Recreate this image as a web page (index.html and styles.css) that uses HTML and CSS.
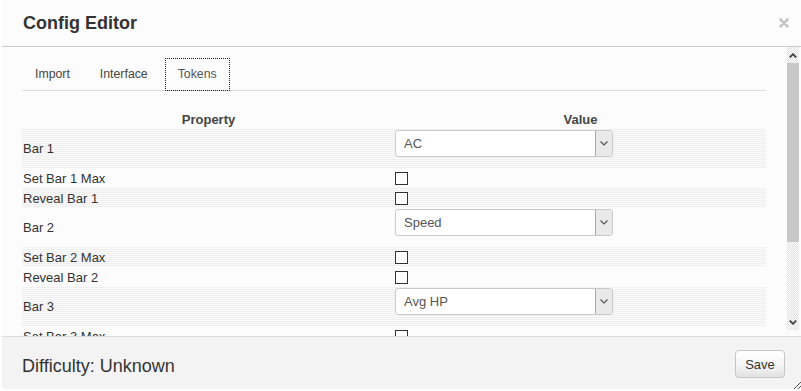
FILE: index.html
```html
<!DOCTYPE html>
<html>
<head>
    <title>Config Editor</title>
    <link rel="stylesheet" href="styles.css">
</head>
<body>
    <div class="dialog">
        <div class="dialog-header">
            <h1>Config Editor</h1>
            <span class="close" title="Close">
                <svg width="10" height="10" viewBox="0 0 10 10"><path d="M1.5 1.5 L8.5 8.5 M8.5 1.5 L1.5 8.5" stroke="#c4c4c4" stroke-width="2.6" stroke-linecap="round"/></svg>
            </span>
        </div>

        <div class="dialog-body">
            <div class="content">
                <ul class="tabs">
                    <li>Import</li>
                    <li>Interface</li>
                    <li class="active">Tokens</li>
                </ul>

                <table class="config">
                    <thead>
                        <tr>
                            <th class="prop">Property</th>
                            <th>Value</th>
                        </tr>
                    </thead>
                    <tbody>
                        <tr class="bar">
                            <td>Bar 1</td>
                            <td>
                                <div class="select">
                                    <select><option>AC</option></select>
                                    <span class="arrow"><svg width="8" height="5" viewBox="0 0 8 5"><path d="M0.5 0.5 L4 4 L7.5 0.5" fill="none" stroke="#555" stroke-width="1.2"/></svg></span>
                                </div>
                            </td>
                        </tr>
                        <tr class="check">
                            <td>Set Bar 1 Max</td>
                            <td><input type="checkbox"></td>
                        </tr>
                        <tr class="check">
                            <td>Reveal Bar 1</td>
                            <td><input type="checkbox"></td>
                        </tr>
                        <tr class="bar">
                            <td>Bar 2</td>
                            <td>
                                <div class="select">
                                    <select><option>Speed</option></select>
                                    <span class="arrow"><svg width="8" height="5" viewBox="0 0 8 5"><path d="M0.5 0.5 L4 4 L7.5 0.5" fill="none" stroke="#555" stroke-width="1.2"/></svg></span>
                                </div>
                            </td>
                        </tr>
                        <tr class="check">
                            <td>Set Bar 2 Max</td>
                            <td><input type="checkbox"></td>
                        </tr>
                        <tr class="check">
                            <td>Reveal Bar 2</td>
                            <td><input type="checkbox"></td>
                        </tr>
                        <tr class="bar">
                            <td>Bar 3</td>
                            <td>
                                <div class="select">
                                    <select><option>Avg HP</option></select>
                                    <span class="arrow"><svg width="8" height="5" viewBox="0 0 8 5"><path d="M0.5 0.5 L4 4 L7.5 0.5" fill="none" stroke="#555" stroke-width="1.2"/></svg></span>
                                </div>
                            </td>
                        </tr>
                        <tr class="check">
                            <td>Set Bar 3 Max</td>
                            <td><input type="checkbox"></td>
                        </tr>
                        <tr class="check">
                            <td>Reveal Bar 3</td>
                            <td><input type="checkbox"></td>
                        </tr>
                    </tbody>
                </table>
            </div>

            <div class="scrollbar">
                <div class="sb-btn">
                    <svg width="8" height="5" viewBox="0 0 8 5"><path d="M0.8 4.5 L4 1.2 L7.2 4.5" fill="none" stroke="#444" stroke-width="1.8"/></svg>
                </div>
                <div class="sb-track">
                    <div class="sb-thumb"></div>
                </div>
                <div class="sb-btn">
                    <svg width="8" height="5" viewBox="0 0 8 5"><path d="M0.8 0.5 L4 3.8 L7.2 0.5" fill="none" stroke="#444" stroke-width="1.8"/></svg>
                </div>
            </div>
        </div>

        <div class="dialog-footer">
            <span class="difficulty">Difficulty: Unknown</span>
            <button class="save">Save</button>
        </div>

        <svg class="resize" width="11" height="11" viewBox="0 0 11 11"><path d="M1 11 L11 1 M5 11 L11 5" stroke="#555" stroke-width="1"/></svg>
    </div>
</body>
</html>
```

FILE: styles.css
```css
body {
    margin: 0;
    background: #ffffff;
    font-family: "Liberation Sans", Arial, sans-serif;
    font-size: 13px;
    color: #333;
}

.dialog {
    position: relative;
    height: 389px;
    margin-left: 2px;
    display: flex;
    flex-direction: column;
    background: #fcfcfc;
    border-radius: 0 0 4px 4px;
}

.dialog-header {
    height: 46px;
    flex-shrink: 0;
    display: flex;
    align-items: center;
    justify-content: space-between;
    padding: 0 12px 0 21px;
    border-bottom: 1px solid #cbcbcb;
}

.dialog-header h1 {
    margin: 0;
    font-size: 18px;
    font-weight: bold;
    color: #333;
}

.close {
    display: flex;
    margin-top: -1px;
}

.dialog-body {
    flex: 1;
    min-height: 0;
    display: flex;
    overflow: hidden;
}

.content {
    flex: 1;
    min-width: 0;
    padding: 11px 21px 0 20px;
    overflow: hidden;
}

.tabs {
    list-style: none;
    margin: 0;
    padding: 0;
    display: flex;
    gap: 4px;
    border-bottom: 1px solid #dcdcdc;
}

.tabs li {
    padding: 0 12px;
    font-size: 12.3px;
    line-height: 31px;
    border: 1px solid transparent;
    margin-bottom: -1px;
    color: #444;
}

.tabs li.active {
    border: 1px dotted #222;
    color: #555;
}

.config {
    width: 100%;
    margin-top: 18px;
    border-collapse: collapse;
    table-layout: fixed;
}

.config th {
    height: 20px;
    padding: 0;
    font-weight: bold;
    text-align: center;
    color: #444;
}

.config th.prop {
    width: 373px;
}

.config td {
    padding: 0;
    vertical-align: middle;
}

.config td:first-child {
    padding-left: 1px;
}

.config tr.bar td {
    height: 39px;
}

.config tr.check td {
    height: 20px;
}

.config tbody tr:nth-child(odd) {
    background: repeating-linear-gradient(to bottom, #efefef 0, #efefef 1px, #fafafa 1px, #fafafa 2px);
}

.select {
    display: flex;
    width: 218px;
    height: 27px;
    box-sizing: border-box;
    margin-bottom: 10px;
    border: 1px solid #c9c9c9;
    border-radius: 3px;
    background: #fff;
    overflow: hidden;
}

.select select {
    flex: 1;
    appearance: none;
    -webkit-appearance: none;
    border: none;
    background: transparent;
    padding: 0 0 0 8px;
    font-family: "Liberation Sans", Arial, sans-serif;
    font-size: 13px;
    color: #555;
    outline: none;
}

.select .arrow {
    width: 16px;
    display: flex;
    align-items: center;
    justify-content: center;
    background: #e9e9e9;
    border-left: 1px solid #ababab;
}

input[type="checkbox"] {
    appearance: none;
    -webkit-appearance: none;
    display: block;
    width: 13px;
    height: 13px;
    margin: 0;
    border: 1px solid #333;
    background: #fff;
    border-radius: 0;
}

.scrollbar {
    width: 12px;
    margin: 0 2px 6px 0;
    display: flex;
    flex-direction: column;
}

.sb-btn,
.sb-track {
    background: repeating-conic-gradient(#e3e3e3 0 25%, #fafafa 0 50%) 0 0 / 2px 2px;
}

.sb-btn {
    height: 16px;
    display: flex;
    align-items: center;
    justify-content: center;
}

.sb-track {
    flex: 1;
}

.sb-thumb {
    height: 179px;
    background: #c8c8c8;
}

.dialog-footer {
    height: 52px;
    flex-shrink: 0;
    display: flex;
    align-items: center;
    justify-content: space-between;
    padding: 0 16px 0 20px;
    background: #f3f3f3;
    border-top: 1px solid #dcdcdc;
    border-radius: 0 0 4px 4px;
}

.difficulty {
    margin-top: 6px;
    font-size: 18px;
    color: #333;
}

.save {
    width: 50px;
    height: 28px;
    margin-top: 2px;
    padding: 0;
    font-family: "Liberation Sans", Arial, sans-serif;
    font-size: 13px;
    color: #333;
    border: 1px solid #c6c6c6;
    border-radius: 4px;
    background: linear-gradient(to bottom, #ffffff 0%, #f6f6f6 50%, #e2e2e2 100%);
}

.resize {
    position: absolute;
    right: -1px;
    bottom: -2px;
}
```
